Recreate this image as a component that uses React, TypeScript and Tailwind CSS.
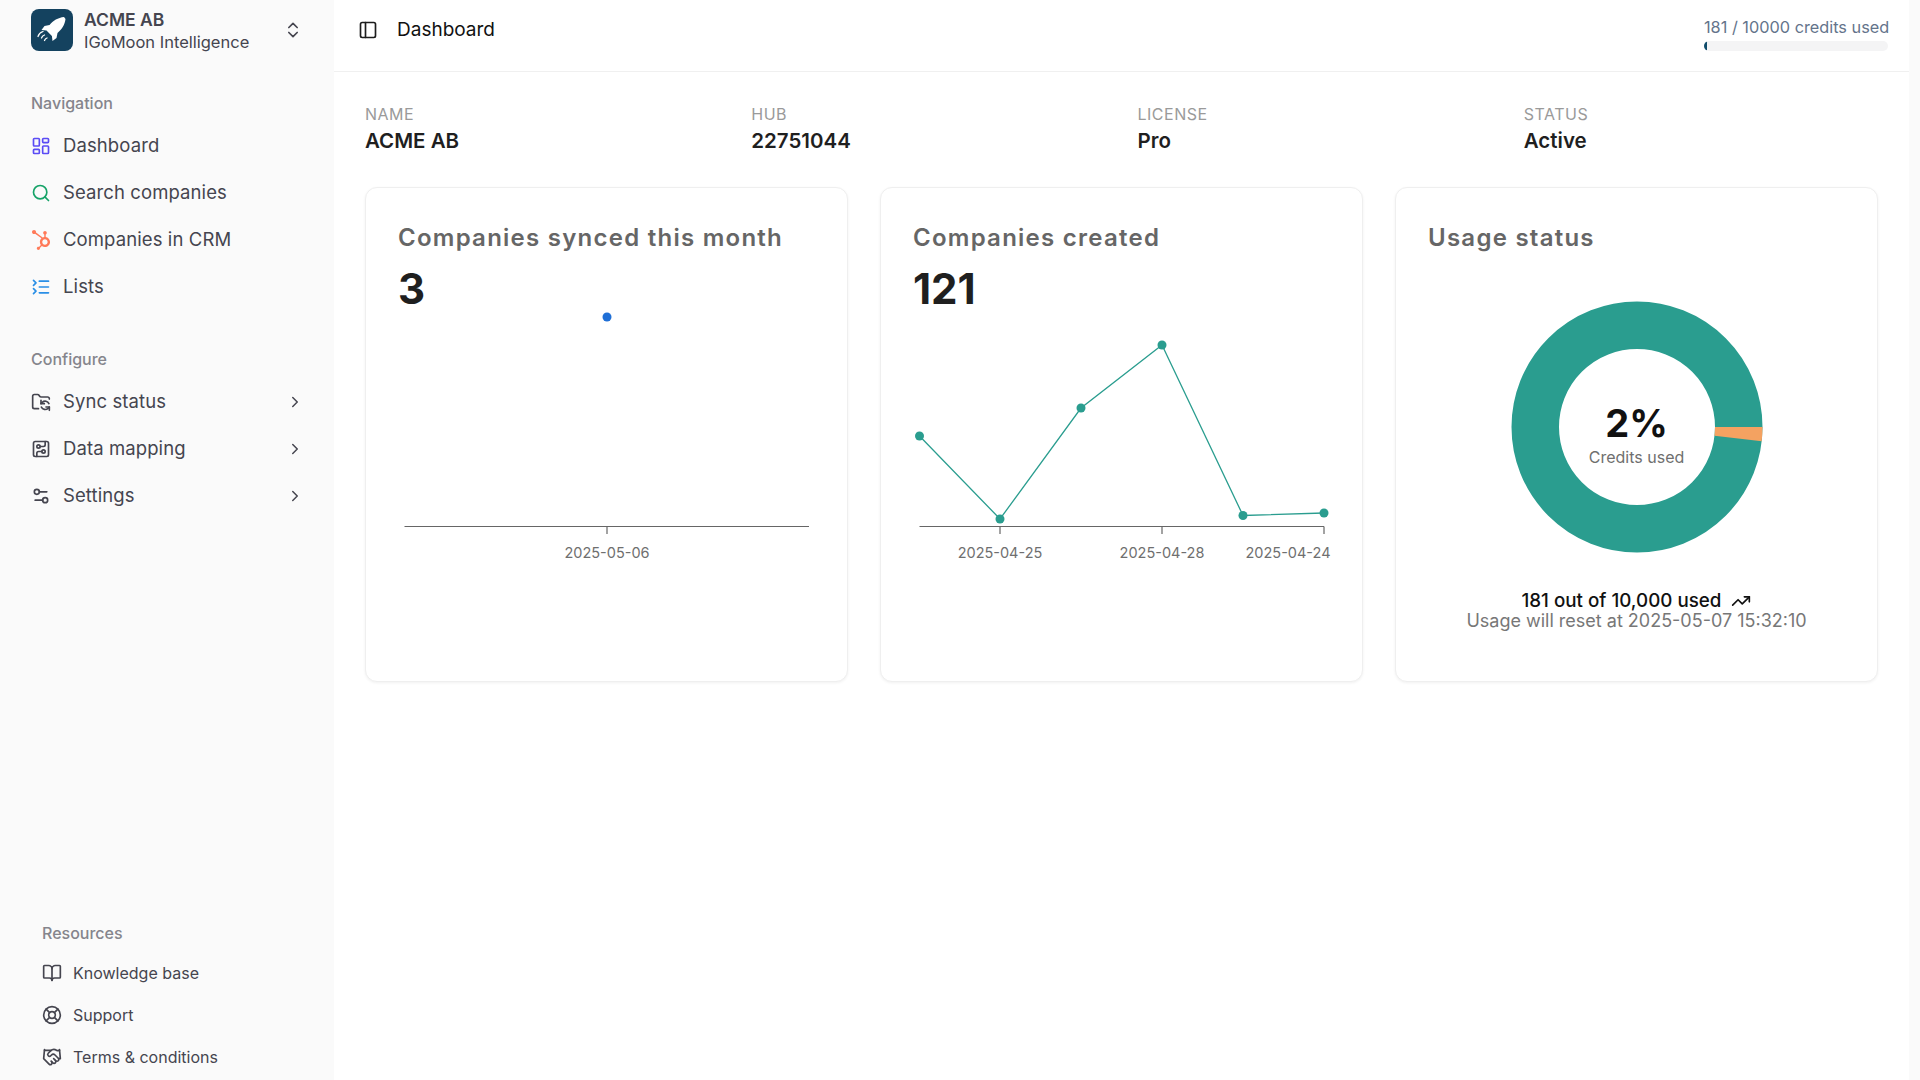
import React from "react";
import {
  LayoutDashboard, Search, ListCollapse, FolderSync, CircuitBoard, Settings2, BookOpen, LifeBuoy,
  Handshake, PanelLeft, ChevronsUpDown, ChevronRight, TrendingUp,
} from "lucide-react";
import { FaHubspot } from "react-icons/fa";

function Rocket() {
  return (
    <svg viewBox="0 0 42 42" className="h-[42px] w-[42px]">
      <path d="M33 8c-6 .6-11 3.6-14.5 8l-5 1-3 4 5 .6 5.4 5.4.6 5 4-3 1-5c4.4-3.500 7.400-8.500 8-14z" fill="#fff" />
      <path d="M13.500 26c-1.500.5-2.500 1.500-3 3M12 22.500c-2.500.8-4.300 2.600-5 5M16 29c-1.300.4-2 1.200-2.500 2.500" stroke="#fff" strokeWidth="1.300" fill="none" strokeLinecap="round" />
    </svg>
  );
}

function NavItem({ icon, label, chevron }: { icon: React.ReactNode; label: string; chevron?: boolean }) {
  return (
    <div className="flex h-[47px] items-center">
      <span className="flex w-[32px] items-center">{icon}</span>
      <span className="text-[18.500px] font-normal tracking-[0.1px] text-[#45454f]">{label}</span>
      {chevron && <ChevronRight className="ml-auto -mr-[1px] h-[18px] w-[18px] text-[#45454f]" />}
    </div>
  );
}

function ResItem({ icon, label }: { icon: React.ReactNode; label: string }) {
  return (
    <div className="flex h-[42px] items-center">
      <span className="flex w-[31px] items-center text-[#45454f]">{icon}</span>
      <span className="text-[16px] text-[#45454f]">{label}</span>
    </div>
  );
}

function Info({ label, value }: { label: string; value: string }) {
  return (
    <div>
      <div className="h-[20px] text-[16px] leading-[20px] tracking-[0.5px] text-[#9a9a9a]">{label}</div>
      <div className="mt-[5px] h-[24px] text-[20.500px] font-semibold leading-[24px] text-[#1f1f1f]">{value}</div>
    </div>
  );
}

function Card({ children }: { children: React.ReactNode }) {
  return (
    <div className="h-[495px] rounded-xl border border-[#efefef] bg-white px-[32px] pt-[32px] shadow-[0_1px_3px_rgba(0,0,0,0.06)]">
      {children}
    </div>
  );
}

function Title({ children }: { children: React.ReactNode }) {
  return <h3 className="h-[36px] text-[24px] font-semibold leading-[36px] tracking-[1.250px] text-[#666666]">{children}</h3>;
}

function Big({ children }: { children: React.ReactNode }) {
  return <div className="mt-[9px] h-[48px] text-[42px] font-bold leading-[48px] text-[#1f1f1f]">{children}</div>;
}

const pts: [number, number][] = [
  [21.500, 121], [102, 204], [183, 93], [264, 30], [345, 200.500], [426, 198],
];

function Axis({ ticks, labels }: { ticks: number[]; labels: [number, string][] }) {
  return (
    <g>
      <line x1="21.500" y1="211.500" x2="426" y2="211.500" stroke="#666" strokeWidth="1.200" />
      {ticks.map((t) => (
        <line key={t} x1={t} y1="211.500" x2={t} y2="219" stroke="#666" strokeWidth="1.200" />
      ))}
      {labels.map(([x, l]) => (
        <text key={l} x={x} y="243" textAnchor="middle" fontSize="14.500" fill="#6f6f6f" fontFamily="Inter">{l}</text>
      ))}
    </g>
  );
}

export default function App() {
  const r1 = 125.5, r0 = 78, a = (6.500 * Math.PI) / 180;
  const c = 130;
  const slice = `M${c + r1} ${c}A${r1} ${r1} 0 0 1 ${c + r1 * Math.cos(a)} ${c + r1 * Math.sin(a)}L${c + r0 * Math.cos(a)} ${c + r0 * Math.sin(a)}A${r0} ${r0} 0 0 0 ${c + r0} ${c}Z`;
  return (
    <div className="flex h-screen w-full overflow-hidden bg-[#fafafa] font-['Inter',sans-serif]">
      <aside className="flex w-[334px] shrink-0 flex-col justify-between pb-[2px] pt-[9px]">
        <div className="px-[31px]">
          <div className="flex h-[42px] items-center">
            <div className="h-[42px] w-[42px] rounded-lg bg-[#14425f]"><Rocket /></div>
            <div className="ml-[11px] pt-[2px]">
              <div className="text-[17.500px] font-semibold leading-[22px] text-[#45454f]">ACME AB</div>
              <div className="text-[16.500px] leading-[22px] text-[#45454f]">IGoMoon Intelligence</div>
            </div>
            <ChevronsUpDown className="ml-auto h-[20px] w-[20px] text-[#45454f]" />
          </div>
          <div className="mt-[42px] h-[20px] text-[16px] font-medium leading-[20px] text-[#85858c]">Navigation</div>
          <div className="mt-[9px]">
            <NavItem icon={<LayoutDashboard className="h-[20px] w-[20px] text-[#5b4cf5]" />} label="Dashboard" />
            <NavItem icon={<Search className="h-[20px] w-[20px] text-[#16a368]" />} label="Search companies" />
            <NavItem icon={<FaHubspot className="h-[20px] w-[20px] text-[#ff7a59]" />} label="Companies in CRM" />
            <NavItem icon={<ListCollapse className="h-[20px] w-[20px] text-[#2a8fe6]" />} label="Lists" />
          </div>
          <div className="mt-[39px] h-[20px] text-[16px] font-medium leading-[20px] text-[#85858c]">Configure</div>
          <div className="mt-[9px]">
            <NavItem icon={<FolderSync className="h-[20px] w-[20px] text-[#45454f]" />} label="Sync status" chevron />
            <NavItem icon={<CircuitBoard className="h-[20px] w-[20px] text-[#45454f]" />} label="Data mapping" chevron />
            <NavItem icon={<Settings2 className="h-[20px] w-[20px] text-[#45454f]" />} label="Settings" chevron />
          </div>
        </div>
        <div className="px-[42px]">
          <div className="mb-[9px] h-[20px] text-[16px] font-medium leading-[20px] text-[#85858c]">Resources</div>
          <ResItem icon={<BookOpen className="h-[20px] w-[20px]" />} label="Knowledge base" />
          <ResItem icon={<LifeBuoy className="h-[20px] w-[20px]" />} label="Support" />
          <ResItem icon={<Handshake className="h-[20px] w-[20px]" />} label="Terms & conditions" />
        </div>
      </aside>

      <main className="mr-[11px] min-w-0 flex-1 bg-white">
        <header className="flex h-[72px] items-start justify-between border-b border-[#f0f0f0] pl-[24px] pr-[21px]">
          <div className="flex h-[60px] items-center">
            <PanelLeft className="h-[20px] w-[20px] text-[#1c1c1c]" />
            <span className="ml-[19px] text-[19px] text-[#111111]">Dashboard</span>
          </div>
          <div className="w-[184px] pt-[16px]">
            <div className="whitespace-nowrap text-right text-[16.300px] leading-[22px] text-[#64748b]">181 / 10000 credits used</div>
            <div className="mt-[3px] h-[10px] overflow-hidden rounded-full bg-[#f4f4f5]">
              <div className="h-full rounded-full bg-[#0f4c6b]" style={{ width: `${(181 / 10000) * 100}%` }} />
            </div>
          </div>
        </header>

        <div className="px-[31px] pt-[32px]">
          <div className="grid grid-cols-4 gap-8">
            <Info label="NAME" value="ACME AB" />
            <Info label="HUB" value="22751044" />
            <Info label="LICENSE" value="Pro" />
            <Info label="STATUS" value="Active" />
          </div>
          <div className="mt-[34px] grid grid-cols-3 gap-8">
            <Card>
              <Title>Companies synced this month</Title>
              <Big>3</Big>
              <svg width="430" height="260" className="-ml-[15px] mt-[2px] block overflow-visible">
                <circle cx="224" cy="2" r="4.500" fill="#1f6fd6" />
                <line x1="21.500" y1="211.500" x2="426" y2="211.500" stroke="#666" strokeWidth="1.200" />
                <line x1="224" y1="211.500" x2="224" y2="219" stroke="#666" strokeWidth="1.200" />
                <text x="224" y="243" textAnchor="middle" fontSize="14.500" fill="#6f6f6f" fontFamily="Inter">2025-05-06</text>
              </svg>
            </Card>
            <Card>
              <Title>Companies created</Title>
              <Big>121</Big>
              <svg width="430" height="260" className="-ml-[15px] mt-[2px] block overflow-visible">
                <polyline points={pts.map((p) => p.join(",")).join(" ")} fill="none" stroke="#2a9d8f" strokeWidth="1.300" />
                {pts.map(([x, y]) => (
                  <circle key={x} cx={x} cy={y} r="4.500" fill="#2a9d8f" />
                ))}
                <Axis ticks={[102, 264, 426]} labels={[[102, "2025-04-25"], [264, "2025-04-28"], [390, "2025-04-24"]]} />
              </svg>
            </Card>
            <Card>
              <Title>Usage status</Title>
              <div className="relative mx-auto mt-[41px] h-[260px] w-[260px]">
                <svg width="260" height="260" className="block">
                  <circle cx={c} cy={c} r={(r1 + r0) / 2} fill="none" stroke="#2a9d8f" strokeWidth={r1 - r0} />
                  <path d={slice} fill="#f4a261" />
                </svg>
                <div className="absolute inset-0 flex flex-col items-center pt-[103px]">
                  <div className="text-[38px] font-bold leading-[46px] text-[#111111]">2%</div>
                  <div className="mt-[1px] text-[16px] leading-[20px] text-[#6f6f6f]">Credits used</div>
                </div>
              </div>
              <div className="mt-[34px] text-center">
                <div className="flex items-center justify-center text-[18.800px] font-medium leading-[20px] text-[#111111]">
                  181 out of 10,000 used
                  <TrendingUp className="ml-[10px] h-[20px] w-[20px]" />
                </div>
                <div className="text-[18px] leading-[20px] text-[#777777]">Usage will reset at 2025-05-07 15:32:10</div>
              </div>
            </Card>
          </div>
        </div>
      </main>
    </div>
  );
}
